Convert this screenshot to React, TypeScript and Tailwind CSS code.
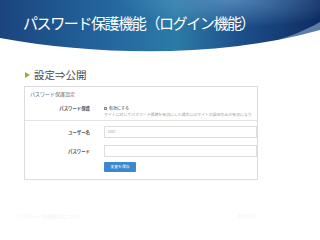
import React from "react";

const JP = "font-['Noto_Sans_CJK_JP','Noto_Sans',sans-serif]";

function Header() {
  return (
    <div className="relative h-[56px] overflow-hidden bg-[linear-gradient(90deg,#1b447d_0%,#2467a0_35%,#2b7ba6_55%,#1d4f8a_75%,#0f2c62_100%)]">
      {/* soft highlight near the top */}
      <div className="absolute inset-0 bg-[radial-gradient(ellipse_at_73%_0%,rgba(120,170,215,0.55)_0%,rgba(120,170,215,0)_35%)]" />
      <svg
        className="absolute inset-0"
        width="320"
        height="56"
        viewBox="0 0 320 56"
        aria-hidden="true"
      >
        <path
          d="M170,56 C235,54 285,42 320,22 L320,34 C285,48 235,56 170,56 Z"
          fill="#7f9dc8"
          opacity="0.7"
        />
        <path d="M0,38 C100,56 220,58 320,30 L320,56 L0,56 Z" fill="#ffffff" />
      </svg>
      <h1
        className={`relative pl-[23px] pt-[13px] text-[15px] leading-[20px] tracking-[-1.4px] text-white ${JP}`}
      >
        パスワード保護機能（ログイン機能）
      </h1>
    </div>
  );
}

function Row({
  label,
  children,
  className = "",
}: {
  label: string;
  children: React.ReactNode;
  className?: string;
}) {
  return (
    <div className={`flex items-center ${className}`}>
      <div className="w-[66px] shrink-0 pr-[1px] text-right text-[4.4px] font-semibold text-[#555]">
        {label}
      </div>
      <div className="ml-[13px] flex-1 min-w-0">{children}</div>
    </div>
  );
}

export default function App() {
  return (
    <div className={`relative h-[240px] w-[320px] overflow-hidden bg-white ${JP}`}>
      <Header />

      {/* bullet */}
      <div className="ml-[25px] mt-[12px] flex items-center gap-[4px]">
        <span className="h-0 w-0 border-y-[3px] border-l-[5px] border-y-transparent border-l-[#8ab833]" />
        <span className="text-[10.5px] leading-[13px] text-[#4a4a4a]">設定⇒公開</span>
      </div>

      {/* settings panel */}
      <div className="ml-[24px] mt-[5px] h-[94px] w-[234px] overflow-hidden border border-[#dcdcdc]">
        <div className="pl-[5px] pt-[3px] text-[5px] leading-[7px] text-[#666]">
          パスワード保護設定
        </div>

        <Row label="パスワード保護" className="mt-[8px] items-start">
          <div className="flex items-center gap-[2px] text-[4px] leading-[6px] text-[#444]">
            <span className="flex h-[3px] w-[3px] items-center justify-center border border-[#888] bg-[#eee]" />
            有効にする
          </div>
          <div className="whitespace-nowrap text-[3.9px] leading-[6px] text-[#999]">
            サイトに対してパスワード保護を有効にした場合にはサイトの設定のみが有効になり
          </div>
        </Row>

        <div className="mt-[3px] border-t border-[#e4e4e4]" />

        <Row label="ユーザー名" className="mt-[5px]">
          <div className="flex h-[12px] items-center border border-[#dedede] pl-[3px] text-[3.8px] text-[#aaa]">
            user
          </div>
        </Row>

        <Row label="パスワード" className="mt-[7px]">
          <div className="h-[12px] border border-[#dedede]" />
        </Row>

        <Row label="" className="mt-[5px]">
          <div className="flex h-[10px] w-[32px] items-center justify-center rounded-[1px] bg-[#3b88cf] text-[3.8px] text-white">
            変更を保存
          </div>
        </Row>
      </div>

      {/* faint footer */}
      <div className="mt-[32px] flex justify-between px-[17px] pr-[64px] text-[5px] text-[#f3f3f3]">
        <span>パスワード保護機能について</span>
        <span>2015/01</span>
      </div>
    </div>
  );
}
